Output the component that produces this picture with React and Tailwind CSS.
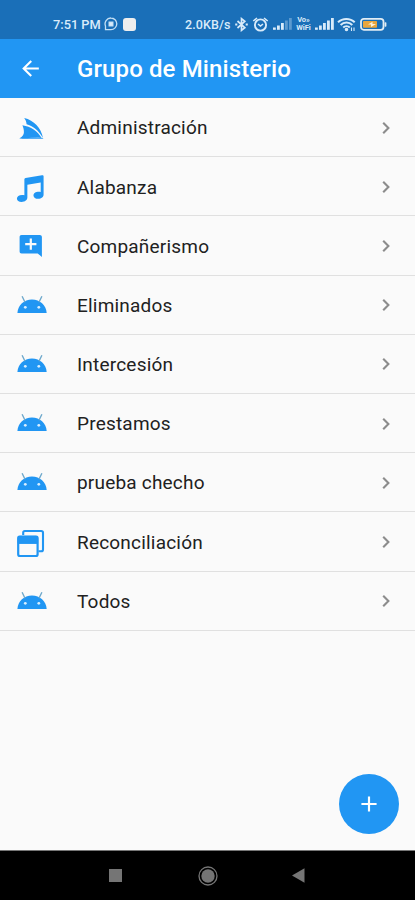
import React from "react";
import { MdArrowBack, MdAdd } from "react-icons/md";

const FinIcon = () => (
  <svg className="mt-[4px] h-[30px] w-[30px]" viewBox="0 0 30 30" fill="#2196f3">
    <path d="M9.2 4C19 6.4 26 13.6 28 24C23.4 15.6 17.6 12.2 11.6 10.2C11.4 7.8 10.6 5.8 9.2 4Z" />
    <path d="M7.4 11.2C16 12.6 22.6 17 26.6 24C22 23 17 23 12.8 24.2H4.6C7.6 22.6 8.8 20.6 8.9 18.4C9 16 8.4 13.4 7.4 11.2Z" />
    <path d="M4.6 24.4C11 23.2 21 22.8 28.2 24.2V24.8H4.6Z" />
  </svg>
);

const MusicIcon = () => (
  <svg className="mt-[5px] h-[30px] w-[32px]" viewBox="1.4 0 30 30" preserveAspectRatio="none" fill="#2196f3">
    <path d="M10.2 5.3C10.2 4.6 10.6 4.1 11.3 3.9L26.7 1.2C27.6 1.1 28.2 1.5 28.2 2.2V20.5C28.2 23 26.2 24.8 23.2 24.8C20.6 24.8 18.7 23.4 18.7 21.4C18.7 19.3 20.8 17.7 23.6 17.7C24.3 17.7 24.9 17.8 25.5 18V8.4L13 10.7V23.3C13 26 10.8 28 7.6 28C5 28 3.2 26.6 3.2 24.6C3.2 22.4 5.1 20.9 8 20.9C8.9 20.9 9.6 21 10.2 21.3Z" />
  </svg>
);

const AddCommentIcon = () => (
  <svg className="mt-[1px] h-[30px] w-[30px]" viewBox="0 0 30 30">
    <path
      d="M6.6 4H24.8C26 4 26.9 4.8 26.9 6V26L22.7 22.4H6.6C5.3 22.4 4.6 21.6 4.6 20.4V6C4.6 4.8 5.3 4 6.6 4Z"
      fill="#2196f3"
    />
    <path d="M15.8 7.6V18.8M10.2 13.2H21.4" stroke="#fafafa" strokeWidth="2.2" />
  </svg>
);

const AndroidIcon = () => (
  <svg className="h-[30px] w-[30px] overflow-visible" viewBox="0 0 30 30">
    <path d="M2.4 22.9C3 15 8.9 9.5 17 9.5C25 9.5 31 15 31.7 22.9Z" fill="#2196f3" />
    <path d="M10 12.2L7.1 6.3M24 12.2L26.9 6.3" stroke="#6fa9cc" strokeWidth="1.4" />
    <circle cx="10.3" cy="17.3" r="1.4" fill="#d9efff" />
    <circle cx="23.8" cy="17.3" r="1.4" fill="#d9efff" />
  </svg>
);

const WindowsIcon = () => (
  <svg className="mt-[3px] h-[30px] w-[30px]" viewBox="0 0 30 30" fill="none" stroke="#2196f3">
    <path d="M8.2 7V4.7C8.2 3.6 8.8 3 9.8 3H26.2C27.4 3 28 3.6 28 4.7V21.4C28 22.5 27.4 23.2 26.2 23.2H23.4" strokeWidth="2.1" />
    <rect x="3.2" y="8.6" width="19.4" height="19.4" rx="1.8" strokeWidth="2.2" />
    <path d="M3.2 8.4H22.6V15.4H3.2Z" fill="#2196f3" strokeWidth="1" />
  </svg>
);

const Chevron = () => (
  <svg className="mt-[1px] mr-[24px] h-[14px] w-[10px]" viewBox="0 0 10 14">
    <path d="M2.2 1.8L7.4 7L2.2 12.2" fill="none" stroke="#8c8c8c" strokeWidth="2.1" />
  </svg>
);

const groups = [
  { name: "Administración", Icon: FinIcon },
  { name: "Alabanza", Icon: MusicIcon },
  { name: "Compañerismo", Icon: AddCommentIcon },
  { name: "Eliminados", Icon: AndroidIcon },
  { name: "Intercesión", Icon: AndroidIcon },
  { name: "Prestamos", Icon: AndroidIcon },
  { name: "prueba checho", Icon: AndroidIcon },
  { name: "Reconciliación", Icon: WindowsIcon },
  { name: "Todos", Icon: AndroidIcon },
];

const Signal = ({ weak }) => (
  <svg className="h-[13px] w-[19px]" viewBox="0 0 19 13" fill="#d9ebfa">
    <rect x="0" y="10.5" width="2.8" height="2.3" />
    <rect x="4" y="8.5" width="2.8" height="4.3" />
    <rect x="8" y="6" width="2.8" height="6.8" />
    <rect x="12" y="3.5" width="2.8" height="9.3" opacity={weak ? 0.35 : 1} />
    <rect x="16" y="1" width="2.8" height="11.8" opacity={weak ? 0.35 : 1} />
  </svg>
);

const StatusBar = () => (
  <div className="flex h-[39px] items-start bg-[#1a6fb8] pt-[17px] pl-[53px] text-[#d9ebfa]">
    <span className="w-[51px] whitespace-nowrap text-[12.8px] font-medium leading-[15px]">
      7:51 PM
    </span>
    <svg className="h-[14px] w-[14px]" viewBox="0 0 14 14" fill="none" stroke="#c4dff4">
      <path d="M7 1A5.8 5.8 0 1 1 7 12.6H1.5V9A5.8 5.8 0 0 1 7 1Z" strokeWidth="1.3" />
      <rect x="5" y="5" width="4" height="4" fill="#d9ebfa" />
    </svg>
    <div className="mt-[1px] ml-[5px] h-[13px] w-[13px] rounded-[3px] bg-[#eeeeee]" />
    <span className="ml-[49px] w-[49px] whitespace-nowrap text-[12.5px] font-medium leading-[15px] tracking-[0.1px]">
      2.0KB/s
    </span>
    <svg className="h-[15px] w-[15px]" viewBox="0 0 15 15" fill="none" stroke="#d9ebfa" strokeWidth="1.7">
      <path d="M3.5 4L10.8 10.6L7.5 13.3V1.7L10.8 4.4L3.5 11" />
      <path d="M1.2 7.5H3.3M11.7 7.5H13.8" strokeWidth="1.9" />
    </svg>
    <svg className="ml-[3px] h-[15px] w-[17px]" viewBox="0 0 17 15" fill="none" stroke="#d9ebfa">
      <circle cx="8.5" cy="8" r="5.6" strokeWidth="1.9" />
      <path d="M1.3 4L5 1M15.7 4L12 1M6 7L8.5 9L11 7" strokeWidth="1.6" />
    </svg>
    <div className="ml-[4px]">
      <Signal weak />
    </div>
    <div className="ml-[3px] flex w-[17px] flex-col items-center text-[7.5px] font-bold leading-[8px]">
      <span className="-mt-[1px]">Vo»</span>
      <span>WiFi</span>
    </div>
    <div className="ml-[3px]">
      <Signal />
    </div>
    <svg className="ml-[3px] h-[15px] w-[19px]" viewBox="0 0 19 15" fill="none" stroke="#d9ebfa" strokeWidth="2">
      <path d="M1 5.2C5.5 .8 13.2 .8 17.7 5.2M3.6 8C7 4.8 12 4.8 15.3 8M6.2 10.5C8 8.7 11 8.7 12.8 10.5" />
      <circle cx="9.5" cy="12.5" r=".8" fill="#d9ebfa" />
      <path d="M14.5 10.5V14M17 10.5V14" strokeWidth="1.1" />
    </svg>
    <svg className="ml-[4px] h-[15px] w-[28px]" viewBox="0 0 28 15">
      <rect x="1" y="1.8" width="22.5" height="11" rx="2.8" fill="none" stroke="#e2edf4" strokeWidth="1.8" />
      <rect x="3" y="4" width="14" height="6.8" rx=".8" fill="#e9a63e" />
      <path d="M8 7.5L12.5 4.8V7H16L11 10V7.5Z" fill="#fff1d8" />
      <rect x="24.6" y="5.2" width="1.8" height="4.5" rx=".7" fill="#e2edf4" />
    </svg>
  </div>
);

const App = () => {
  return (
    <div className="flex h-[900px] w-[415px] flex-col overflow-hidden bg-[#fafafa] font-[Roboto,sans-serif]">
      <StatusBar />

      <header className="flex h-[59px] shrink-0 items-center bg-[#2196f3] text-white">
        <button type="button" className="ml-[18px] w-[59px]" aria-label="Volver">
          <MdArrowBack className="h-[25px] w-[25px]" />
        </button>
        <h1 className="text-[24px] font-medium leading-[30px] tracking-[0.12px]">
          Grupo de Ministerio
        </h1>
      </header>

      <main className="relative flex-1 border-b border-[#777777]">
        <ul>
          {groups.map(({ name, Icon }) => (
            <li
              key={name}
              className="flex h-[59.2px] items-center border-b border-[#e0e0e0]"
            >
              <div className="w-[77px] pl-[15px]">
                <Icon />
              </div>
              <span className="flex-1 pt-[3px] text-[19px] tracking-[0.2px] text-[#212121]">
                {name}
              </span>
              <Chevron />
            </li>
          ))}
        </ul>

        <button
          type="button"
          aria-label="Agregar"
          className="absolute right-[16px] bottom-[16px] flex h-[60px] w-[60px] items-center justify-center rounded-full bg-[#2196f3] text-white"
        >
          <MdAdd className="h-[26px] w-[26px]" />
        </button>
      </main>

      <nav className="flex h-[49px] shrink-0 items-center bg-black">
        <div className="ml-[109px] h-[13px] w-[13px] bg-[#757575]" />
        <svg className="ml-[76px] h-[20px] w-[20px]" viewBox="0 0 20 20">
          <circle cx="10" cy="10" r="9" fill="none" stroke="#757575" strokeWidth="1.3" />
          <circle cx="10" cy="10" r="6.7" fill="#757575" />
        </svg>
        <svg className="ml-[74px] h-[15px] w-[13px]" viewBox="0 0 13 15">
          <path d="M0 7.5L12.5 .3V14.7Z" fill="#757575" />
        </svg>
      </nav>
    </div>
  );
};

export default App;
